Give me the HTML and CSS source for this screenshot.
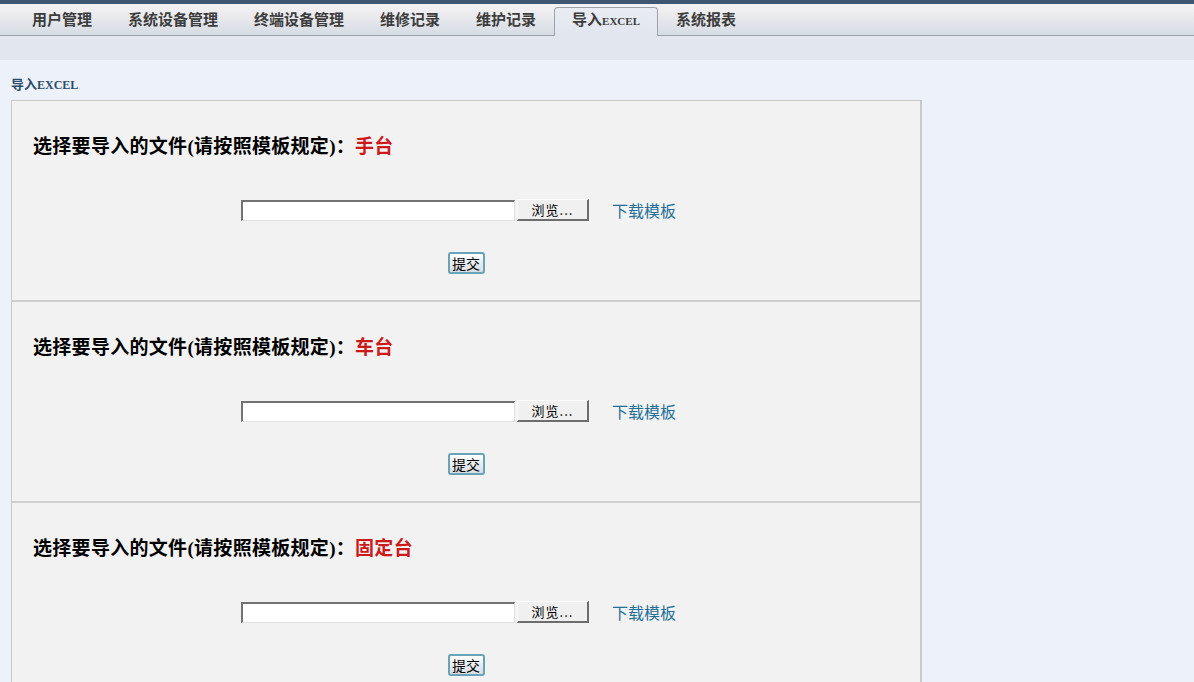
FILE: index.html
```html
<!DOCTYPE html>
<html lang="zh-CN">
<head>
<meta charset="utf-8">
<title>导入EXCEL</title>
<link rel="stylesheet" href="styles.css">
</head>
<body>
<div class="topbar"></div>
<nav class="tabs">
  <a class="tab">用户管理</a>
  <a class="tab">系统设备管理</a>
  <a class="tab">终端设备管理</a>
  <a class="tab">维修记录</a>
  <a class="tab">维护记录</a>
  <a class="tab active">导入<span class="en">EXCEL</span></a>
  <a class="tab">系统报表</a>
</nav>
<div class="subbar"></div>
<main class="content">
  <div class="page-title">导入<span class="en">EXCEL</span></div>
  <div class="panel">
    <section class="import">
      <h2 class="import-title">选择要导入的文件(请按照模板规定)：<span class="kind">手台</span></h2>
      <div class="file-row">
        <input class="file-text" type="text">
        <button class="browse" type="button">浏览...</button>
        <a class="template">下载模板</a>
      </div>
      <div class="submit-row"><button class="submit" type="button">提交</button></div>
    </section>
    <section class="import">
      <h2 class="import-title">选择要导入的文件(请按照模板规定)：<span class="kind">车台</span></h2>
      <div class="file-row">
        <input class="file-text" type="text">
        <button class="browse" type="button">浏览...</button>
        <a class="template">下载模板</a>
      </div>
      <div class="submit-row"><button class="submit" type="button">提交</button></div>
    </section>
    <section class="import">
      <h2 class="import-title">选择要导入的文件(请按照模板规定)：<span class="kind">固定台</span></h2>
      <div class="file-row">
        <input class="file-text" type="text">
        <button class="browse" type="button">浏览...</button>
        <a class="template">下载模板</a>
      </div>
      <div class="submit-row"><button class="submit" type="button">提交</button></div>
    </section>
  </div>
</main>
</body>
</html>
```

FILE: styles.css
```css
html, body {
  margin: 0;
  padding: 0;
}
body {
  background: #edf1f9;
  font-family: "Liberation Serif", "Noto Sans CJK SC", serif;
  color: #000;
  overflow: hidden;
}
.topbar {
  height: 4px;
  background: #3e5672;
}
.tabs {
  display: flex;
  align-items: flex-end;
  height: 31px;
  padding-left: 14px;
  border-bottom: 1px solid #9ca2aa;
  background: linear-gradient(#f4f2f4, #ebebee 35%, #d6dce4);
}
.tab {
  display: block;
  height: 27px;
  line-height: 25px;
  padding: 0 17px;
  border: 1px solid transparent;
  border-bottom: 0;
  border-radius: 4px 4px 0 0;
  font-size: 15px;
  font-weight: 600;
  color: #3c3c3c;
  white-space: nowrap;
}
.tab .en {
  font-size: 11px;
  font-weight: bold;
}
.tab.active {
  height: 28px;
  margin-bottom: -1px;
  background: linear-gradient(#e9ecf2, #e1e6ef);
  border-color: #9ca2aa;
}
.subbar {
  height: 24px;
  background: #e1e6ef;
}
.content {
  padding: 0 11px;
}
.page-title {
  margin-top: 15px;
  height: 20px;
  line-height: 20px;
  font-size: 13px;
  font-weight: 600;
  color: #2b4d6b;
}
.page-title .en {
  font-size: 12px;
  font-weight: bold;
}
.panel {
  margin-top: 5px;
  width: 908px;
  border: 1px solid #c9c9c9;
  border-right-width: 2px;
  background: #f2f2f2;
}
.import {
  height: 201px;
  box-sizing: border-box;
  padding-top: 34px;
  border-bottom: 2px solid #cfcfcf;
}
.import-title {
  margin: 0 0 0 21px;
  height: 24px;
  line-height: 24px;
  font-size: 19px;
  font-weight: bold;
  letter-spacing: 0.3px;
  color: #000;
}
.kind {
  color: #cc1a1a;
}
.file-row {
  display: flex;
  align-items: center;
  justify-content: center;
  margin-top: 40px;
  height: 22px;
  padding-right: 15px;
}
.file-text {
  box-sizing: border-box;
  width: 274px;
  height: 21px;
  margin: 0 2px 0 0;
  padding: 0 2px;
  background: #fff;
  border: 1px solid;
  border-color: #727272 #e0e0e0 #e0e0e0 #727272;
  border-width: 2px 1px 1px 2px;
  outline: none;
}
.browse {
  box-sizing: border-box;
  width: 72px;
  height: 22px;
  margin: 0;
  padding: 0;
  background: #f0f0f0;
  border: 1px solid;
  border-color: #fdfdfd #6d6d6d #6d6d6d #fdfdfd;
  border-width: 1px 2px 2px 1px;
  font-family: "Noto Sans CJK SC", sans-serif;
  font-size: 13px;
  line-height: 18px;
  color: #000;
  letter-spacing: 1px;
}
.template {
  margin-left: 23px;
  font-family: "Noto Sans CJK SC", sans-serif;
  font-size: 16px;
  line-height: 22px;
  color: #246f98;
}
.submit-row {
  display: flex;
  justify-content: center;
  margin-top: 31px;
}
.submit {
  box-sizing: border-box;
  width: 37px;
  height: 22px;
  margin: 0;
  padding: 0;
  border: 2px solid #69a3ba;
  border-radius: 3px;
  background: linear-gradient(#ffffff, #e9ecf0 50%, #d9dde3);
  font-family: "Noto Sans CJK SC", sans-serif;
  font-size: 14px;
  line-height: 17px;
  color: #000;
}
```
